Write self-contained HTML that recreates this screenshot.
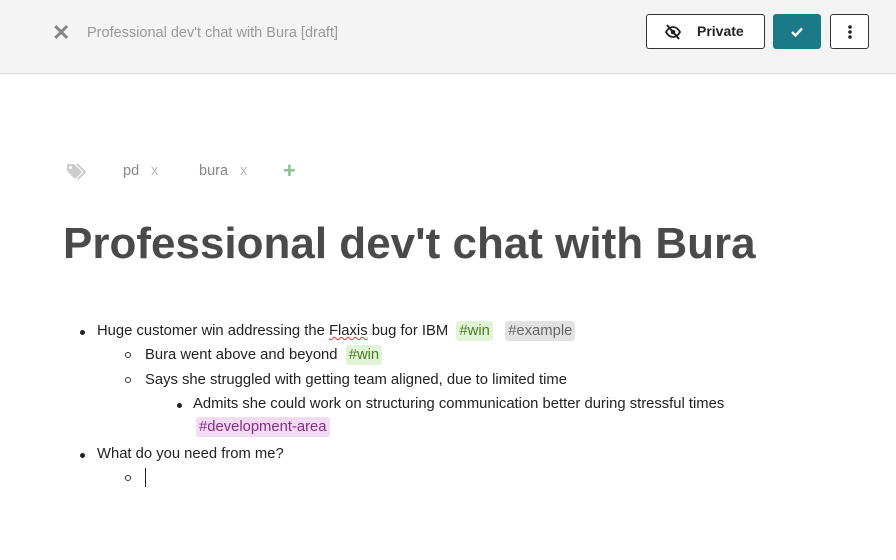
<!DOCTYPE html>
<html><head><meta charset="utf-8"><style>
*{margin:0;padding:0;box-sizing:border-box}
body{width:896px;height:560px;background:#fff;font-family:"Liberation Sans",sans-serif;position:relative;overflow:hidden}
.hdr{position:absolute;left:0;top:0;width:896px;height:74px;background:#f4f4f4;border-bottom:1px solid #ddd}
.x{position:absolute;left:52px;top:20px;font-size:22px;color:#888;font-weight:bold}
.ht{position:absolute;left:87px;top:25px;font-size:14.5px;color:#999}
.btn{position:absolute;top:14px;height:35px;border:1px solid #333;border-radius:3px;background:#fff}
.pv{left:646px;width:119px}
.pv span{position:absolute;left:50px;top:8px;font-weight:bold;font-size:14px;color:#222}
.ok{left:773px;width:48px;background:#1c7a88;border-color:#1c7a88}
.more{left:830px;width:39px}
.tags{position:absolute;top:163px;left:0;font-size:14.5px;color:#888}
.tags span{position:absolute;white-space:nowrap}
h1{position:absolute;left:63px;top:219px;font-size:44px;font-weight:bold;color:#4a4a4a;white-space:nowrap}
.l{position:absolute;font-size:14.8px;color:#222;white-space:nowrap}
.dot{position:absolute;width:5px;height:5px;border-radius:50%;background:#222}
.cir{position:absolute;width:6px;height:6px;border-radius:50%;border:1px solid #333}
.tg{padding:2px 3px;border-radius:3px}
.g{background:#e1f5d6;color:#4a7a2a}.gr{background:#e2e2e2;color:#666}.p{background:#f3dcf3;color:#8a2a8a}
.sq{text-decoration:underline wavy #e33;text-decoration-thickness:1px}
</style></head><body>
<div class="hdr">
<div class="x">✕</div>
<div class="ht">Professional dev't chat with Bura [draft]</div>
<div class="btn pv"><svg style="position:absolute;left:17px;top:9px" width="18" height="16" viewBox="0 0 18 16"><path d="M2 8c2-3.5 4.5-5 7-5s5 1.5 7 5c-2 3.5-4.5 5-7 5s-5-1.5-7-5z" fill="none" stroke="#222" stroke-width="1.8"/><circle cx="9" cy="8" r="2.3" fill="#222"/><path d="M3 1l12 14" stroke="#222" stroke-width="2"/></svg><span>Private</span></div>
<div class="btn ok"><svg style="position:absolute;left:16px;top:10px" width="14" height="14" viewBox="0 0 14 14"><path d="M2 7l3.5 3.5L12 3.5" fill="none" stroke="#fff" stroke-width="2.4"/></svg></div>
<div class="btn more"><svg style="position:absolute;left:16px;top:9px" width="6" height="16"><circle cx="3" cy="3" r="1.8" fill="#222"/><circle cx="3" cy="8" r="1.8" fill="#222"/><circle cx="3" cy="13" r="1.8" fill="#222"/></svg></div>
</div>
<div class="tags">
<svg style="position:absolute;left:66px;top:0" width="22" height="18" viewBox="0 0 22 18"><path d="M1 2v6l8 8 7-7-8-8H2z" fill="#ccc"/><path d="M11 1l8 8-7 7" fill="none" stroke="#ccc" stroke-width="2"/><circle cx="4.5" cy="4.5" r="1.5" fill="#fff"/></svg>
<span style="left:123px">pd</span><span style="left:151px;color:#bbb">x</span>
<span style="left:199px">bura</span><span style="left:240px;color:#bbb">x</span>
<span style="left:283px;top:-5px;font-size:22px;color:#8fc08f;font-weight:bold">+</span>
</div>
<h1>Professional dev't chat with Bura</h1>
<div class="dot" style="left:80px;top:330px"></div>
<div class="l" style="left:97px;top:323px">Huge customer win addressing the <span class="sq">Flaxis</span> bug for IBM &nbsp;<span class="tg g">#win</span> &nbsp;&nbsp;<span class="tg gr">#example</span></div>
<div class="cir" style="left:125px;top:352px"></div>
<div class="l" style="left:145px;top:347px">Bura went above and beyond &nbsp;<span class="tg g">#win</span></div>
<div class="cir" style="left:125px;top:377px"></div>
<div class="l" style="left:145px;top:372px">Says she struggled with getting team aligned, due to limited time</div>
<div class="dot" style="left:177px;top:403px"></div>
<div class="l" style="left:193px;top:396px">Admits she could work on structuring communication better during stressful times</div>
<div class="l" style="left:196px;top:419px"><span class="tg p">#development-area</span></div>
<div class="dot" style="left:80px;top:453px"></div>
<div class="l" style="left:97px;top:446px">What do you need from me?</div>
<div class="cir" style="left:125px;top:475px"></div>
<div style="position:absolute;left:145px;top:468px;width:1px;height:19px;background:#222"></div>
</body></html>
